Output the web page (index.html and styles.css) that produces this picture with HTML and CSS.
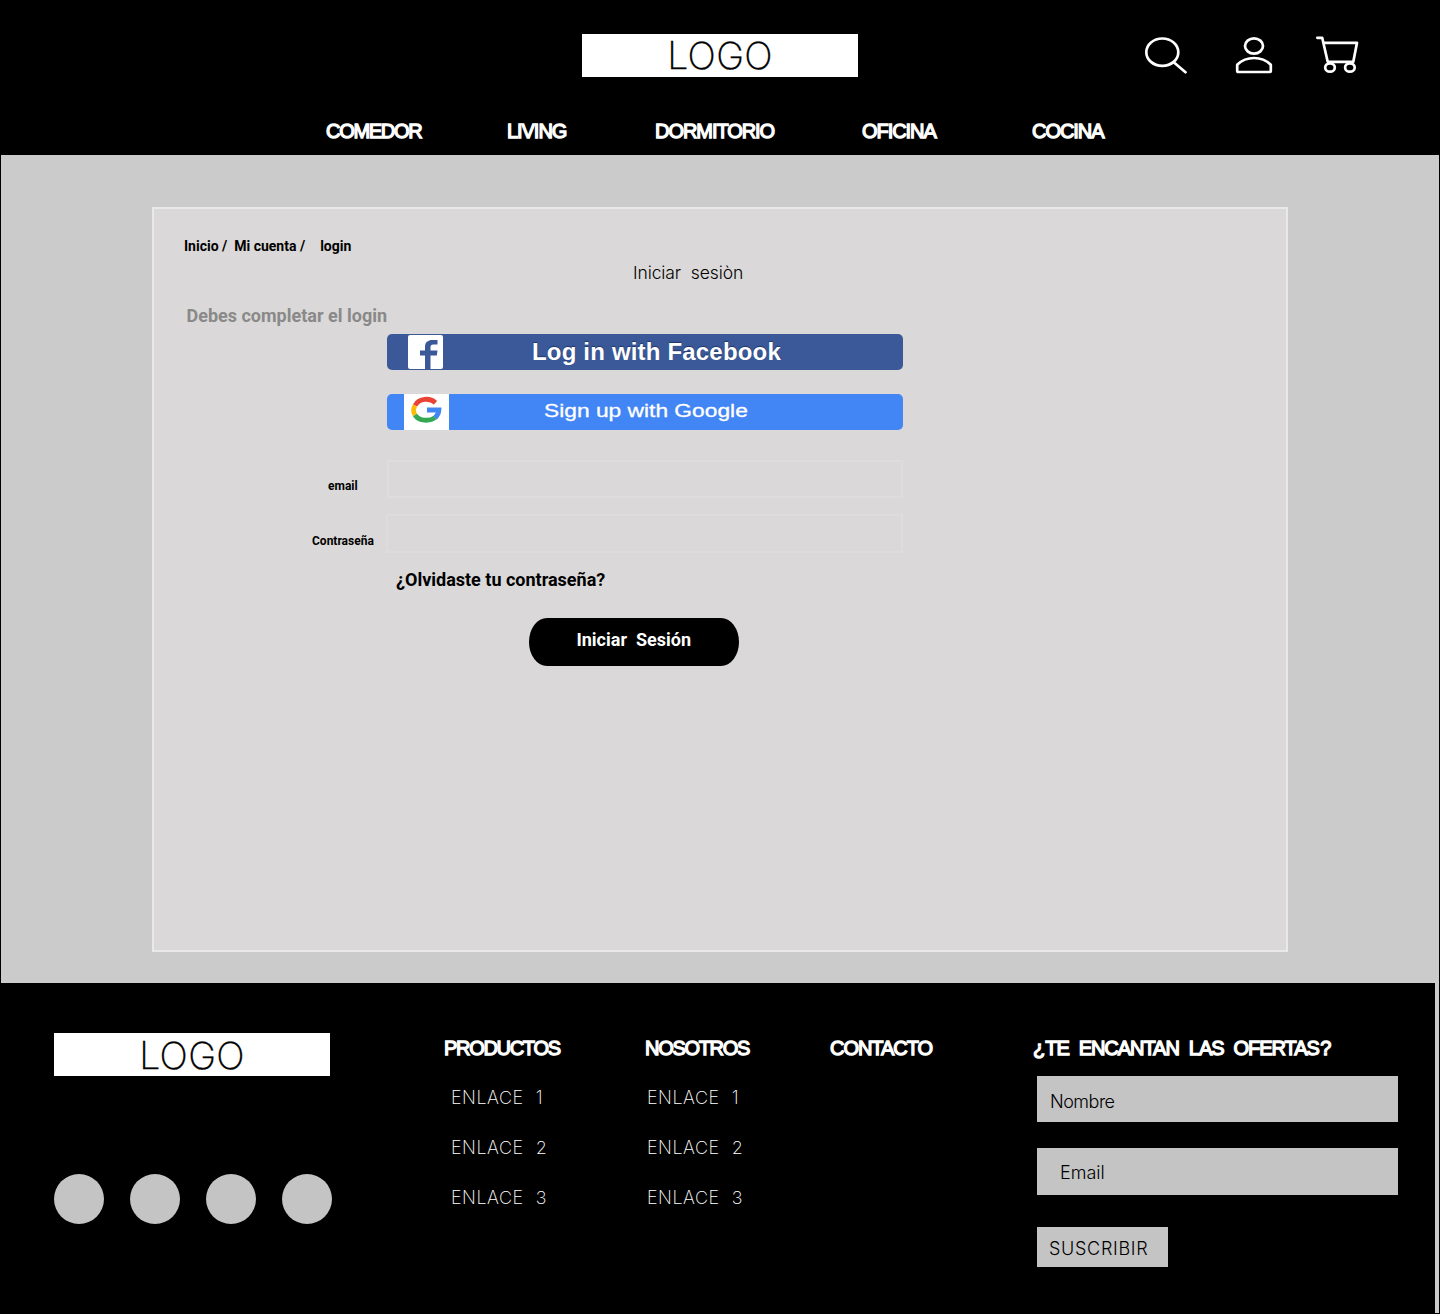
FILE: index.html
```html
<!DOCTYPE html>
<html lang="es">
<head>
<meta charset="utf-8">
<title>Iniciar sesión</title>
<link rel="stylesheet" href="styles.css">
</head>
<body>
<header class="header">
  <div class="topbar">
    <a class="logo">LOGO</a>
    <div class="actions">
      <svg class="icon" width="44" height="40" viewBox="0 0 44 40"><ellipse cx="19.3" cy="18.2" rx="16" ry="13.7"/><path d="M31 28.5 42.5 38.2"/></svg>
      <svg class="icon icon-user" width="38" height="40" viewBox="0 0 38 40"><ellipse cx="19" cy="12" rx="9" ry="7.6"/><path d="M2.2 37V30.7C5 28 10.5 24 19 24S33 28 35.8 30.7V37Q35.8 38 34.5 38H3.5Q2.2 38 2.2 37Z"/></svg>
      <svg class="icon" width="44" height="40" viewBox="0 0 44 40"><path d="M2.3 3.8H7.2L12.7 27.8H38.3L42 8.8H8.3"/><ellipse cx="15" cy="33.5" rx="4.8" ry="4.2"/><ellipse cx="34.9" cy="33.5" rx="4.8" ry="4.2"/></svg>
    </div>
  </div>
  <nav class="nav heading"><a class="tight">COMEDOR</a><a>LIVING</a><a>DORMITORIO</a><a>OFICINA</a><a>COCINA</a></nav>
</header>

<main class="main">
  <section class="card">
    <nav class="crumbs"><span>Inicio /</span><span>Mi cuenta /</span><span>login</span></nav>
    <h1 class="title">Iniciar sesiòn</h1>
    <p class="notice">Debes completar el login</p>
    <button class="social facebook">
      <svg class="fb-logo" width="35" height="34" viewBox="0 0 35 34"><rect width="35" height="34" rx="2" fill="#fff"/><path d="M17 34V20.5H12V15.5H17V12C17 7 20 5 24.5 5H29.5V9.5H26C23 9.5 22.5 10.8 22.5 12.5V15.5H29.5L28.8 20.5H22.5V34Z" fill="#3b5998"/></svg>
      <span class="facebook-text">Log in with Facebook</span>
    </button>
    <button class="social google">
      <svg class="g-logo" width="45" height="36" viewBox="0 0 45 36"><rect width="45" height="36" fill="#fff"/><g fill="none" stroke-width="4.8"><path d="M11 11.5C15 3.8 26 3.7 31.5 8.7" stroke="#ea4335"/><path d="M11 21C9.2 18 9.2 14.5 11 11.5" stroke="#fbbc05"/><path d="M11 21C15 27.5 26 27.5 31 23.5" stroke="#34a853"/><path d="M31 23.7C33.5 21.5 34.7 19 34.9 16H23" stroke="#4285f4"/></g></svg>
      <span class="google-text">Sign up with Google</span>
    </button>
    <form class="form">
      <div class="field"><label for="email" class="label-email">email</label><input id="email" class="input-email" type="email"></div>
      <div class="field field-password"><label for="pass" class="label-pass">Contraseña</label><input id="pass" class="input-pass" type="password"></div>
      <a class="forgot">¿Olvidaste tu contraseña?</a>
      <button class="submit" type="button">Iniciar&nbsp; Sesión</button>
    </form>
  </section>
</main>

<footer class="footer">
  <div class="brand">
    <a class="logo logo-footer">LOGO</a>
    <div class="dots"><i></i><i></i><i></i><i></i></div>
  </div>
  <div class="column">
    <h2 class="heading tight">PRODUCTOS</h2>
    <ul class="links links-indent"><li>ENLACE 1</li><li>ENLACE 2</li><li>ENLACE 3</li></ul>
  </div>
  <div class="column">
    <h2 class="heading tight">NOSOTROS</h2>
    <ul class="links"><li>ENLACE 1</li><li>ENLACE 2</li><li>ENLACE 3</li></ul>
  </div>
  <div class="column"><h2 class="heading">CONTACTO</h2></div>
  <div class="offers">
    <h2 class="heading offers-title"><span class="opening">¿</span>TE ENCANTAN LAS OFERTAS<span class="closing">?</span></h2>
    <div class="box box-name">Nombre</div>
    <div class="box box-email">Email</div>
    <div class="box box-submit">SUSCRIBIR</div>
  </div>
</footer>
</body>
</html>
```
FILE: styles.css
```css
* { box-sizing: border-box; }
body {
  margin: 0;
  width: 1440px;
  height: 1314px;
  background: #cbcbcb;
  border: solid #000;
  border-width: 0 1px 1px;
  font-family: Roboto, sans-serif;
  color: #000;
}
h1, h2, p, ul { margin: 0; padding: 0; font-weight: inherit; }
button { border: 0; padding: 0; font-family: inherit; }

.header { height: 155px; background: #000; color: #fff; }
.topbar {
  display: grid;
  grid-template-columns: 276px 1fr;
  padding: 34px 80px 0 581px;
}
.logo {
  display: block;
  width: 276px;
  height: 42.5px;
  background: #fff;
  color: #000;
  font: 200 37.5px/43px Inter, sans-serif;
  letter-spacing: .3px;
  -webkit-text-stroke: .3px #000;
  text-align: center;
}
.logo-footer { line-height: 45px; }
.actions { display: flex; justify-content: flex-end; }
.icon-user { margin: 0 42px 0 48px; }
.icon {
  fill: none;
  stroke: #fff;
  stroke-width: 2.7;
  stroke-linecap: round;
  stroke-linejoin: round;
}
.heading {
  font: 400 20px/24px "Liberation Sans", Arial, sans-serif;
  letter-spacing: -1.05px;
  -webkit-text-stroke: 1.3px #fff;
  color: #fff;
}
.tight { letter-spacing: -1.3px; }
.nav {
  display: grid;
  grid-template-columns: 181px 148px 207px 170px auto;
  padding: 42px 0 0 325px;
}

.main { padding: 52px 151px 31px; height: 828px; }
.card {
  height: 745px;
  padding: 29px 30px 0;
  background: #dad8d8;
  border: 2px solid #e9e9e9;
}
.crumbs { display: flex; font-weight: 700; font-size: 14px; line-height: 16px; }
.crumbs span:nth-child(2) { margin: 0 15px 0 7px; }
.title {
  padding-left: 449px;
  margin-top: 8px;
  font: 300 17.5px/22px Inter, sans-serif;
  letter-spacing: -.1px;
  word-spacing: 5px;
}
.notice {
  margin: 21px 0 0 2.5px;
  font-weight: 700;
  font-size: 18px;
  line-height: 22px;
  color: #8a8989;
}
.social {
  display: flex;
  align-items: center;
  width: 516px;
  height: 36px;
  margin-left: 203px;
  border-radius: 5px;
  color: #fff;
}
.facebook { margin-top: 7px; padding-left: 21px; background: #3b5998; }
.facebook-text {
  margin-left: 89px;
  font: 700 24px/36px "Liberation Sans", Arial, sans-serif;
  text-shadow: 0 -1px 1px #1f3768;
  letter-spacing: .18px;
}
.google { margin-top: 24px; padding-left: 17px; background: #4285f4; }
.google-text {
  margin: -3px 0 0 95px;
  font: 400 18px/24px "Liberation Sans", Arial, sans-serif;
  -webkit-text-stroke: .3px #fff;
  transform: scaleX(1.265);
  transform-origin: 0 50%;
}
.form { margin: 30px 0 0 128px; }
.field { display: flex; }
.field label { width: 75px; font-weight: 700; font-size: 12px; line-height: 14px; }
.field input {
  width: 516px;
  height: 38px;
  border: 2px solid #dedddd;
  background: transparent;
}
.field .label-email { padding: 19px 0 0 16px; }
.field-password { margin-top: 16px; }
.field .label-pass { width: 74px; padding-top: 20px; }
.field .input-pass { width: 517px; height: 39px; }
.forgot {
  display: block;
  margin: 16px 0 0 84px;
  font-weight: 700;
  font-size: 18px;
  line-height: 22px;
}
.submit {
  display: block;
  width: 210.5px;
  height: 48px;
  margin: 27px 0 0 216.5px;
  padding-bottom: 5px;
  background: #000;
  border-radius: 18px / 24px;
  color: #fff;
  font-weight: 700;
  font-size: 18px;
}

.footer {
  display: grid;
  grid-template-columns: 390px 201px 185px 203px 1fr;
  width: 1434px;
  height: 330px;
  padding: 50px 0 0 53px;
  background: #000;
}
.dots { display: flex; gap: 26px; margin-top: 98px; }
.dots i { width: 50px; height: 50px; border-radius: 50%; background: #c4c4c4; }
.column { padding-top: 3px; }
.links {
  display: grid;
  gap: 26px;
  margin-top: 26px;
  padding-left: 2px;
  list-style: none;
  color: #fff;
  font: 200 18px/24px Inter, sans-serif;
  letter-spacing: .5px;
  word-spacing: 6.5px;
}
.links-indent { padding-left: 7px; }
.offers { padding-top: 3px; }
.offers-title { word-spacing: 5.5px; white-space: nowrap; }
.opening { letter-spacing: 0; }
.closing { margin-left: 1.5px; }
.box {
  width: 361px;
  height: 46px;
  margin-left: 4px;
  padding-left: 13px;
  background: #c4c4c4;
  font: 300 18px/51px Inter, sans-serif;
  letter-spacing: -.5px;
}
.box-name { margin-top: 16px; }
.box-email { margin-top: 26px; padding-left: 23px; height: 47px; line-height: 50px; letter-spacing: 0; }
.box-submit { width: 131px; height: 40px; margin-top: 32px; padding-left: 12px; line-height: 43px; letter-spacing: .7px; }
```
